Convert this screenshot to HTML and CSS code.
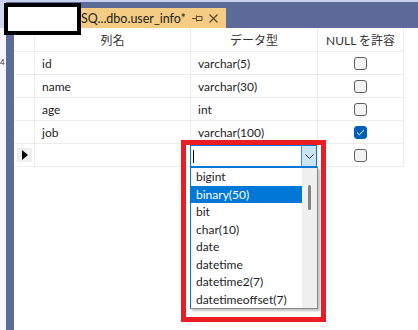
FILE: index.html
```html
<!DOCTYPE html>
<html lang="ja">
<head>
    <meta charset="UTF-8">
    <meta name="viewport" content="width=device-width, initial-scale=1.0">
    <title>Table Designer</title>
    <link rel="stylesheet" href="styles.css">
</head>
<body>
    <div class="app">
        <div class="topline"></div>
        <div class="tabbar">
            <div class="tab">
                <span class="tab-title">SQ...dbo.user_info*</span>
                <svg class="pin" width="11" height="7" viewBox="0 0 11 7">
                    <path d="M0 3.5H4M4.5 0.5V6.5M4.5 1.5H10V5.5H4.5" fill="none" stroke="#5b4a2c" stroke-width="1"/>
                </svg>
                <svg class="close" width="9" height="9" viewBox="0 0 9 9">
                    <path d="M0.5 0.5L8.5 8.5M8.5 0.5L0.5 8.5" stroke="#5b4a2c" stroke-width="1.3"/>
                </svg>
            </div>
        </div>
        <div class="workspace">
            <div class="gutter"><span class="lineno">4</span></div>
            <div class="rail"></div>
            <div class="designer">
                <div class="grid">
                    <div class="cell head rowhead"></div>
                    <div class="cell head">列名</div>
                    <div class="cell head">データ型</div>
                    <div class="cell head">NULL を許容</div>

                    <div class="cell rowhead"></div>
                    <div class="cell">id</div>
                    <div class="cell">varchar(5)</div>
                    <div class="cell check"><span class="box"></span></div>

                    <div class="cell rowhead"></div>
                    <div class="cell">name</div>
                    <div class="cell">varchar(30)</div>
                    <div class="cell check"><span class="box"></span></div>

                    <div class="cell rowhead"></div>
                    <div class="cell">age</div>
                    <div class="cell">int</div>
                    <div class="cell check"><span class="box"></span></div>

                    <div class="cell rowhead"></div>
                    <div class="cell">job</div>
                    <div class="cell">varchar(100)</div>
                    <div class="cell check">
                        <span class="box checked">
                            <svg width="9" height="7" viewBox="0 0 9 7">
                                <path d="M1 3.6L3.3 5.8L8 1.2" fill="none" stroke="#fff" stroke-width="1"/>
                            </svg>
                        </span>
                    </div>

                    <div class="cell rowhead"><span class="current"></span></div>
                    <div class="cell"></div>
                    <div class="cell edit">
                        <div class="combo">
                            <span class="caret"></span>
                            <span class="combo-btn">
                                <svg width="9" height="5" viewBox="0 0 9 5">
                                    <path d="M0.5 0.5L4.5 4.5L8.5 0.5" fill="none" stroke="#333" stroke-width="1"/>
                                </svg>
                            </span>
                            <div class="droplist">
                                <ul class="items">
                                    <li>bigint</li>
                                    <li class="selected">binary(50)</li>
                                    <li>bit</li>
                                    <li>char(10)</li>
                                    <li>date</li>
                                    <li>datetime</li>
                                    <li>datetime2(7)</li>
                                    <li>datetimeoffset(7)</li>
                                </ul>
                                <div class="scrollbar"><span class="thumb"></span></div>
                            </div>
                        </div>
                    </div>
                    <div class="cell check"><span class="box"></span></div>
                </div>
            </div>
        </div>
    </div>

    <div class="redact"></div>
    <div class="marker"></div>
</body>
</html>
```

FILE: styles.css
```css
body {
    margin: 0;
    width: 418px;
    height: 330px;
    overflow: hidden;
    background: #ffffff;
    font-family: Lato, "Noto Sans CJK JP", sans-serif;
    font-size: 12px;
    color: #1e1e1e;
}

.app {
    display: flex;
    flex-direction: column;
    height: 330px;
}

.topline {
    height: 2px;
    background: #c9d0ee;
}

.tabbar {
    height: 26px;
    display: flex;
    align-items: flex-end;
    padding-left: 14px;
    background: linear-gradient(to right, #cfd5ef 0, #cfd5ef 6px, #5d6b99 6px);
}

.tab {
    height: 20px;
    width: 212px;
    box-sizing: border-box;
    display: flex;
    align-items: center;
    padding-left: 67px;
    background: #f5cc84;
}

.tab-title {
    color: #1e1e1e;
    font-size: 12.5px;
    width: 111px;
    white-space: nowrap;
}

.close {
    margin-left: 6px;
}

.workspace {
    flex: 1;
    display: flex;
}

.gutter {
    width: 6px;
    background: #f5f7fd;
    overflow: hidden;
}

.lineno {
    display: block;
    margin-top: 29px;
    font-size: 8px;
    color: #333;
}

.rail {
    width: 8px;
    background: #5d6b99;
}

.designer {
    flex: 1;
}

.grid {
    display: grid;
    grid-template-columns: 21px 156px 127px 86px;
    grid-template-rows: 24px repeat(5, 23px);
}

.cell {
    box-sizing: border-box;
    border-right: 1px solid #ececec;
    border-bottom: 1px solid #ececec;
    padding-left: 7px;
    display: flex;
    align-items: center;
    white-space: nowrap;
}

.head {
    justify-content: center;
    padding-left: 0;
    color: #333;
}

.rowhead {
    padding-left: 0;
    justify-content: center;
}

.current {
    width: 15px;
    height: 14px;
    background: #efefef;
    position: relative;
}

.current::after {
    content: "";
    position: absolute;
    left: 5px;
    top: 2px;
    border-left: 6px solid #000;
    border-top: 5px solid transparent;
    border-bottom: 5px solid transparent;
}

.check {
    justify-content: center;
    padding-left: 0;
}

.box {
    width: 13px;
    height: 13px;
    box-sizing: border-box;
    border: 1px solid #606060;
    border-radius: 3px;
    background: #f3f3f3;
    display: flex;
    align-items: center;
    justify-content: center;
}

.box.checked {
    background: #005fb8;
    border-color: #005fb8;
}

.edit {
    padding-left: 0;
    align-items: flex-start;
    overflow: visible;
}

.combo {
    position: relative;
    margin-left: -1px;
    margin-top: 1px;
    width: 128px;
    height: 22px;
    box-sizing: border-box;
    border: 1px solid #0078d7;
    background: #fff;
    display: flex;
    align-items: center;
}

.caret {
    width: 1px;
    height: 13px;
    margin-left: 2px;
    background: #000;
}

.combo-btn {
    margin-left: auto;
    width: 15px;
    height: 20px;
    box-sizing: border-box;
    border-left: 1px solid #3c8fd6;
    background: #cce4f7;
    display: flex;
    align-items: center;
    justify-content: center;
}

.droplist {
    position: absolute;
    left: -1px;
    top: 21px;
    width: 128px;
    height: 142px;
    box-sizing: border-box;
    border: 1px solid #0078d7;
    border-bottom-color: #8a8a8a;
    border-right-color: #8a8a8a;
    background: #fff;
    display: flex;
    overflow: hidden;
    box-shadow: 2px 2px 2px rgba(0, 0, 0, 0.25);
    z-index: 2;
}

.items {
    list-style: none;
    margin: 0;
    padding: 0;
    width: 111px;
}

.items li {
    height: 17.5px;
    line-height: 17.5px;
    padding-left: 5px;
    color: #1e1e1e;
}

.items li.selected {
    background: #0078d7;
    color: #fff;
}

.scrollbar {
    flex: 1;
    background: #f0f0f0;
    position: relative;
}

.thumb {
    position: absolute;
    left: 6px;
    top: 17px;
    width: 3px;
    height: 25px;
    border-radius: 2px;
    background: #858585;
}

.redact {
    position: absolute;
    left: 4px;
    top: 3px;
    width: 77px;
    height: 32px;
    box-sizing: border-box;
    border: 4px solid #000;
    background: #fff;
}

.marker {
    position: absolute;
    left: 181px;
    top: 140px;
    width: 145px;
    height: 182px;
    box-sizing: border-box;
    border: 5px solid #ed1c24;
    z-index: 3;
}
```
